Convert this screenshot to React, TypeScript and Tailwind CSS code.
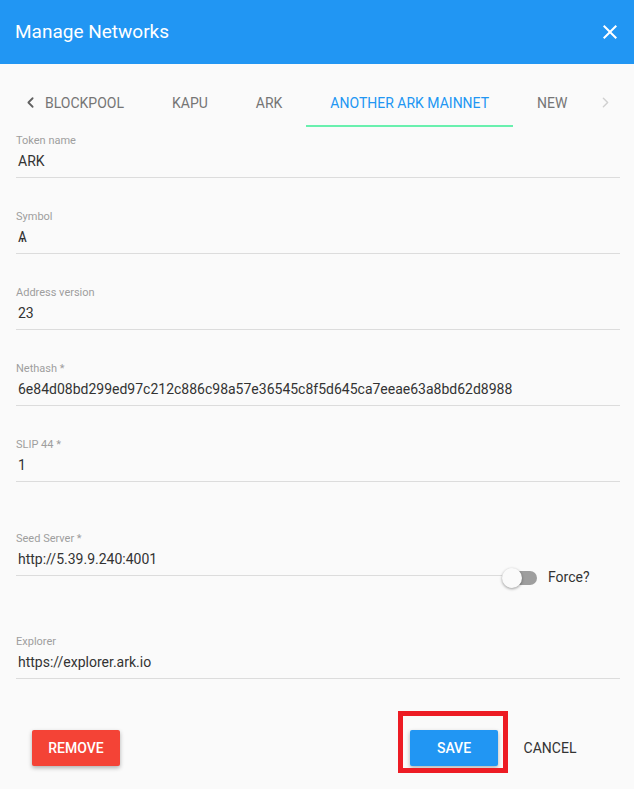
import { ChevronLeft, ChevronRight } from 'lucide-react';

const tabs = ['Blockpool', 'Kapu', 'Ark', 'Another Ark Mainnet', 'New'];
const active = 3;

function Field({ label, value, className = '' }: { label: string; value: string; className?: string }) {
  return (
    <div className={className}>
      <div className="text-[11px] leading-4 text-[#9e9e9e]">{label}</div>
      <div className="mt-[2px] pl-[2px] text-[14px] leading-5 text-[#333333]">{value}</div>
      <div className="mt-[6px] border-b border-[#dcdcdc]" />
    </div>
  );
}

export default function App() {
  return (
    <div className="min-h-screen bg-[#fafafa] font-['Roboto','Liberation_Sans',sans-serif]">
      {/* header */}
      <div className="flex h-16 items-center justify-between bg-[#2196f3] pl-[15px] pr-3 text-white">
        <h1 className="text-[19px] font-normal">Manage Networks</h1>
        <svg viewBox="0 0 24 24" className="h-6 w-6 fill-white">
          <path d="M19 6.41L17.59 5 12 10.59 6.41 5 5 6.41 10.59 12 5 17.59 6.41 19 12 13.41 17.59 19 19 17.59 13.41 12z" />
        </svg>
      </div>

      {/* tabs */}
      <div className="relative mt-[15px] h-12 overflow-hidden">
        <div className="flex h-12 pl-[21px]">
          {tabs.map((t, i) => (
            <div
              key={t}
              className={
                'flex h-12 items-center whitespace-nowrap px-6 text-[14px] uppercase ' +
                (i === active ? 'border-b-2 border-[#69f0ae] pt-[2px] text-[#2196f3]' : 'text-[#757575]')
              }
            >
              {t}
            </div>
          ))}
        </div>
        <ChevronLeft className="absolute left-[22px] top-[15px] h-[17px] w-[17px] text-[#616161]" strokeWidth={2.5} />
        <ChevronRight className="absolute left-[597px] top-[15px] h-[17px] w-[17px] text-[#d0d0d0]" strokeWidth={2} />
      </div>

      {/* form */}
      <div className="mt-[6px] pl-4 pr-[14px]">
        <Field label="Token name" value="ARK" />
        <Field className="mt-[31px]" label="Symbol" value="Ѧ" />
        <Field className="mt-[31px]" label="Address version" value="23" />
        <Field
          className="mt-[31px]"
          label="Nethash *"
          value="6e84d08bd299ed97c212c886c98a57e36545c8f5d645ca7eeae63a8bd62d8988"
        />
        <Field className="mt-[31px]" label="SLIP 44 *" value="1" />

        <div className="mt-[49px] flex items-start">
          <Field className="flex-1" label="Seed Server *" value="http://5.39.9.240:4001" />
          <div className="mt-[36px] flex w-[118px] items-center">
            <div className="relative h-5 w-[36px]">
              <div className="absolute left-[1px] top-[3px] h-[14px] w-[34px] rounded-full bg-[#9e9e9e]" />
              <div className="absolute left-0 top-0 h-5 w-5 rounded-full bg-[#fafafa] shadow-[0_1px_3px_rgba(0,0,0,0.4)]" />
            </div>
            <span className="ml-[10px] text-[14px] text-[#333333]">Force?</span>
          </div>
        </div>

        <Field className="mt-[46px]" label="Explorer" value="https://explorer.ark.io" />
      </div>

      {/* actions */}
      <div className="mt-[51px] flex items-center pl-8 pr-10">
        <button className="h-9 w-[88px] rounded-[2px] bg-[#f44336] text-[14px] font-medium uppercase text-white shadow-[0_2px_4px_rgba(0,0,0,0.3)]">
          Remove
        </button>
        <div className="flex-1" />
        <div className="relative">
          <button className="h-9 w-[88px] rounded-[2px] bg-[#2196f3] text-[14px] font-medium uppercase text-white shadow-[0_2px_4px_rgba(0,0,0,0.3)]">
            Save
          </button>
          <div className="pointer-events-none absolute -bottom-[7px] -left-3 -right-[10px] -top-[19px] border-[5px] border-[#ed1c24]" />
        </div>
        <button className="ml-2 h-9 w-[88px] text-[14px] uppercase text-[#333333]">Cancel</button>
      </div>
    </div>
  );
}
